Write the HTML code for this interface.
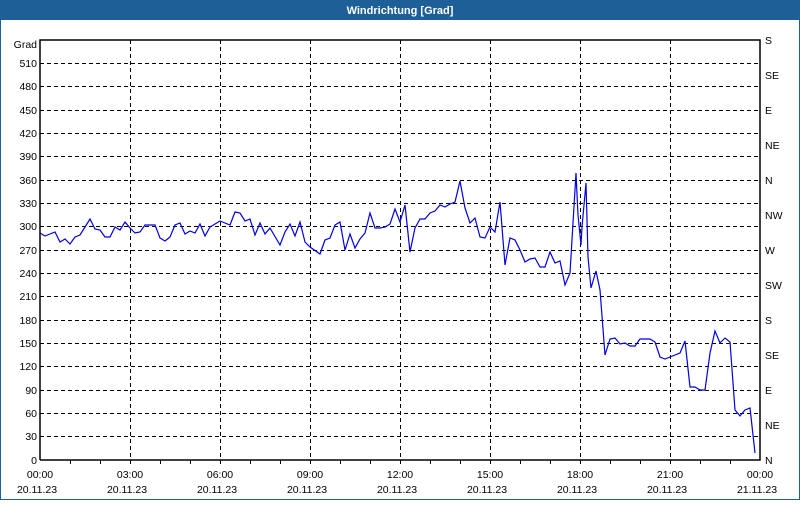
<!DOCTYPE html>
<html><head><meta charset="utf-8"><style>
html,body{margin:0;padding:0;background:#fff}
body{width:800px;height:500px;overflow:hidden}
</style></head><body>
<svg width="800" height="500" xmlns="http://www.w3.org/2000/svg" font-family="Liberation Sans, sans-serif" font-size="10.5">
<rect x="0.5" y="0.5" width="799" height="499" fill="#fff" stroke="#1d5f96"/>
<rect x="0" y="0" width="800" height="20" fill="#1d5f96"/>
<text x="400" y="14" fill="#fff" font-weight="bold" text-anchor="middle" font-size="11">Windrichtung [Grad]</text>
<g stroke="#000" stroke-dasharray="4,3" stroke-width="1">
<line x1="40" x2="760" y1="63.5" y2="63.5"/><line x1="40" x2="760" y1="86.5" y2="86.5"/><line x1="40" x2="760" y1="110.5" y2="110.5"/><line x1="40" x2="760" y1="133.5" y2="133.5"/><line x1="40" x2="760" y1="156.5" y2="156.5"/><line x1="40" x2="760" y1="180.5" y2="180.5"/><line x1="40" x2="760" y1="203.5" y2="203.5"/><line x1="40" x2="760" y1="226.5" y2="226.5"/><line x1="40" x2="760" y1="250.5" y2="250.5"/><line x1="40" x2="760" y1="273.5" y2="273.5"/><line x1="40" x2="760" y1="296.5" y2="296.5"/><line x1="40" x2="760" y1="320.5" y2="320.5"/><line x1="40" x2="760" y1="343.5" y2="343.5"/><line x1="40" x2="760" y1="366.5" y2="366.5"/><line x1="40" x2="760" y1="390.5" y2="390.5"/><line x1="40" x2="760" y1="413.5" y2="413.5"/><line x1="40" x2="760" y1="436.5" y2="436.5"/>
<line x1="130.5" x2="130.5" y1="40" y2="460"/><line x1="220.5" x2="220.5" y1="40" y2="460"/><line x1="310.5" x2="310.5" y1="40" y2="460"/><line x1="400.5" x2="400.5" y1="40" y2="460"/><line x1="490.5" x2="490.5" y1="40" y2="460"/><line x1="580.5" x2="580.5" y1="40" y2="460"/><line x1="670.5" x2="670.5" y1="40" y2="460"/>
</g>
<polyline fill="none" stroke="#0000e0" stroke-width="1.2" points="40,233 45,236 55,232 60,242 65,239 70,244 75,237 80,235 90,219 95,229 100,230 105,237 110,237 115,227 120,230 125,222 130,228 135,233 140,232 145,225 155,225 160,238 165,241 170,237 175,225 180,223 185,234 190,231 195,233 200,224 205,236 210,227 220,221 230,225 235,212 240,213 245,221 250,219 255,235 260,223 265,234 270,228 280,245 285,232 290,224 295,236 300,222 305,242 310,247 320,254 325,240 330,238 335,225 340,222 345,250 350,234 355,248 360,239 365,233 370,213 375,228 380,228 385,227 390,224 395,209 400,222 405,205 410,252 415,228 420,219 425,219 430,213 435,211 440,205 445,207 450,204 455,202 460,181 465,208 470,223 475,218 480,237 485,238 490,227 495,232 500,202 505,265 510,238 515,240 520,250 525,262 530,259 535,258 540,267 545,267 550,252 555,263 560,261 565,285 570,273 573,223 576,173 578,215 581,245 582,227 586,183 588,257 591,288 596,271 600,290 605,355 610,339 615,338 620,344 625,343 630,346 635,346 640,339 650,339 655,342 660,357 665,359 670,357 680,353 685,341 690,387 695,387 700,390 705,390 710,353 715,331 720,343 725,338 730,342 735,410 740,416 745,410 750,408 755,453"/>
<g stroke="#000" stroke-width="1.5" fill="none">
<polyline points="40,460 40,40 760,40 760,460 40,460"/>
</g>
<g stroke="#000" stroke-width="1">
<line x1="70.5" x2="70.5" y1="460" y2="464"/><line x1="100.5" x2="100.5" y1="460" y2="464"/><line x1="130.5" x2="130.5" y1="460" y2="464"/><line x1="160.5" x2="160.5" y1="460" y2="464"/><line x1="190.5" x2="190.5" y1="460" y2="464"/><line x1="220.5" x2="220.5" y1="460" y2="464"/><line x1="250.5" x2="250.5" y1="460" y2="464"/><line x1="280.5" x2="280.5" y1="460" y2="464"/><line x1="310.5" x2="310.5" y1="460" y2="464"/><line x1="340.5" x2="340.5" y1="460" y2="464"/><line x1="370.5" x2="370.5" y1="460" y2="464"/><line x1="400.5" x2="400.5" y1="460" y2="464"/><line x1="430.5" x2="430.5" y1="460" y2="464"/><line x1="460.5" x2="460.5" y1="460" y2="464"/><line x1="490.5" x2="490.5" y1="460" y2="464"/><line x1="520.5" x2="520.5" y1="460" y2="464"/><line x1="550.5" x2="550.5" y1="460" y2="464"/><line x1="580.5" x2="580.5" y1="460" y2="464"/><line x1="610.5" x2="610.5" y1="460" y2="464"/><line x1="640.5" x2="640.5" y1="460" y2="464"/><line x1="670.5" x2="670.5" y1="460" y2="464"/><line x1="700.5" x2="700.5" y1="460" y2="464"/><line x1="730.5" x2="730.5" y1="460" y2="464"/>
</g>
<g fill="#000" text-anchor="end">
<text x="37" y="48">Grad</text><text x="37" y="67">510</text><text x="37" y="90">480</text><text x="37" y="114">450</text><text x="37" y="137">420</text><text x="37" y="160">390</text><text x="37" y="184">360</text><text x="37" y="207">330</text><text x="37" y="230">300</text><text x="37" y="254">270</text><text x="37" y="277">240</text><text x="37" y="300">210</text><text x="37" y="324">180</text><text x="37" y="347">150</text><text x="37" y="370">120</text><text x="37" y="394">90</text><text x="37" y="417">60</text><text x="37" y="440">30</text><text x="37" y="464">0</text>
</g>
<g fill="#000">
<text x="765" y="44">S</text><text x="765" y="79">SE</text><text x="765" y="114">E</text><text x="765" y="149">NE</text><text x="765" y="184">N</text><text x="765" y="219">NW</text><text x="765" y="254">W</text><text x="765" y="289">SW</text><text x="765" y="324">S</text><text x="765" y="359">SE</text><text x="765" y="394">E</text><text x="765" y="429">NE</text><text x="765" y="464">N</text>
</g>
<g fill="#000" text-anchor="middle">
<text x="40" y="478">00:00</text><text x="130" y="478">03:00</text><text x="220" y="478">06:00</text><text x="310" y="478">09:00</text><text x="400" y="478">12:00</text><text x="490" y="478">15:00</text><text x="580" y="478">18:00</text><text x="670" y="478">21:00</text><text x="760" y="478">00:00</text>
<text x="37" y="493">20.11.23</text><text x="127" y="493">20.11.23</text><text x="217" y="493">20.11.23</text><text x="307" y="493">20.11.23</text><text x="397" y="493">20.11.23</text><text x="487" y="493">20.11.23</text><text x="577" y="493">20.11.23</text><text x="667" y="493">20.11.23</text><text x="757" y="493">21.11.23</text>
</g>
</svg>
</body></html>
